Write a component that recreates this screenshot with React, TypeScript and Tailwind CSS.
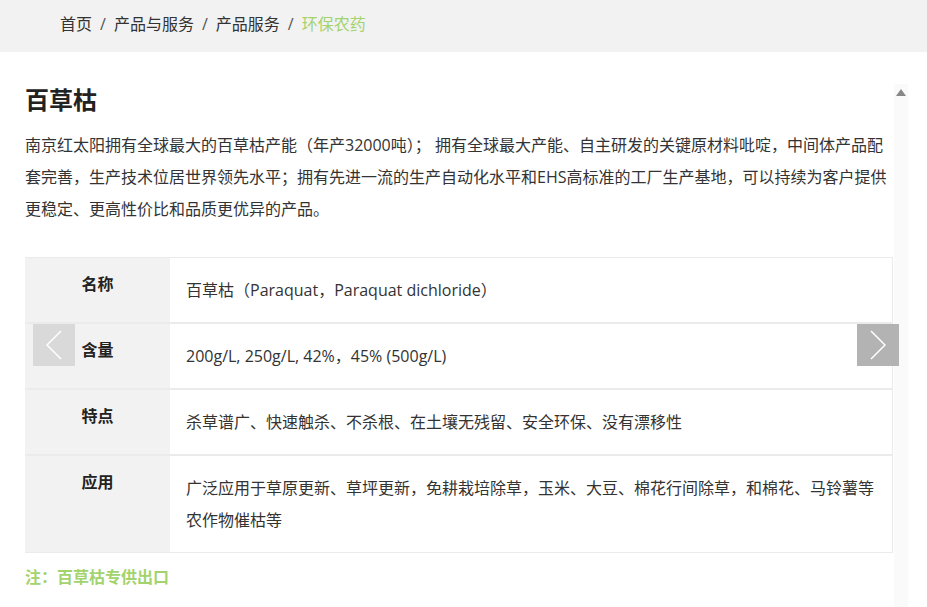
import React from "react";

const rows: { label: string; lines: string[] }[] = [
  { label: "名称", lines: ["百草枯（Paraquat，Paraquat dichloride）"] },
  { label: "含量", lines: ["200g/L, 250g/L, 42%，45% (500g/L)"] },
  { label: "特点", lines: ["杀草谱广、快速触杀、不杀根、在土壤无残留、安全环保、没有漂移性"] },
  {
    label: "应用",
    lines: ["广泛应用于草原更新、草坪更新，免耕栽培除草，玉米、大豆、棉花行间除草，和棉花、马铃薯等", "农作物催枯等"],
  },
];

export default function App() {
  return (
    <div
      className="w-[927px] h-[607px] overflow-hidden bg-white text-[#333]"
      style={{ fontFamily: '"Open Sans", "Noto Sans CJK SC", sans-serif' }}
    >
      <div className="h-[52px] bg-[#f2f2f2] flex items-center pb-[4px] pl-[60px] text-[16px] text-[#333]">
        <span>首页</span>
        <span className="mx-[8px] text-[#555]">/</span>
        <span>产品与服务</span>
        <span className="mx-[8px] text-[#555]">/</span>
        <span>产品服务</span>
        <span className="mx-[8px] text-[#555]">/</span>
        <span className="text-[#a2d36c]">环保农药</span>
      </div>
      <div className="flex">
        <div className="w-[894px] pl-[25px] pr-[1px] relative">
          <h1 className="mt-[32px] text-[24px] leading-[32px] font-bold text-[#222]">百草枯</h1>
          <p className="mt-[13px] text-[16px] leading-[32px] text-[#333]">
            南京红太阳拥有全球最大的百草枯产能（年产32000吨）； 拥有全球最大产能、自主研发的关键原材料吡啶，中间体产品配套完善，生产技术位居世界领先水平；拥有先进一流的生产自动化水平和EHS高标准的工厂生产基地，可以持续为客户提供更稳定、更高性价比和品质更优异的产品。
          </p>
          <div className="mt-[32px] border-t border-r border-[#ebebeb] relative">
            {rows.map((r, i) => (
              <div
                key={r.label}
                className={`flex ${i === rows.length - 1 ? "border-b" : "border-b-2"} border-[#ebebeb]`}
              >
                <div className="w-[145px] shrink-0 bg-[#f2f2f2] text-center pt-[15px] text-[16px] leading-[22px] font-bold text-[#222]">
                  {r.label}
                </div>
                <div className="flex-1 px-[16px] py-[16px] text-[16px] leading-[32px] text-[#333]">
                  {r.lines.map((l) => (
                    <div key={l}>{l}</div>
                  ))}
                </div>
              </div>
            ))}
            <div className="absolute left-[8px] top-[66px] w-[42px] h-[42px] bg-[#d9d9d9] flex items-center justify-center">
              <svg width="16" height="30" viewBox="0 0 16 30">
                <polyline points="15,1 1,15 15,29" fill="none" stroke="#fff" strokeWidth="1.5" />
              </svg>
            </div>
            <div className="absolute right-[-7px] top-[66px] w-[42px] h-[42px] bg-[#b3b3b3] flex items-center justify-center">
              <svg width="16" height="30" viewBox="0 0 16 30">
                <polyline points="1,1 15,15 1,29" fill="none" stroke="#fff" strokeWidth="1.5" />
              </svg>
            </div>
          </div>
          <div className="mt-[12px] text-[16px] leading-[24px] font-bold text-[#a2d36c]">注：百草枯专供出口</div>
        </div>
        <div className="w-[14px] mt-[32px] h-[560px] bg-[#fafafa] flex justify-center pt-[5px]">
          <svg width="10" height="8" viewBox="0 0 10 8">
            <polygon points="5,0 10,7 0,7" fill="#888" />
          </svg>
        </div>
      </div>
    </div>
  );
}
